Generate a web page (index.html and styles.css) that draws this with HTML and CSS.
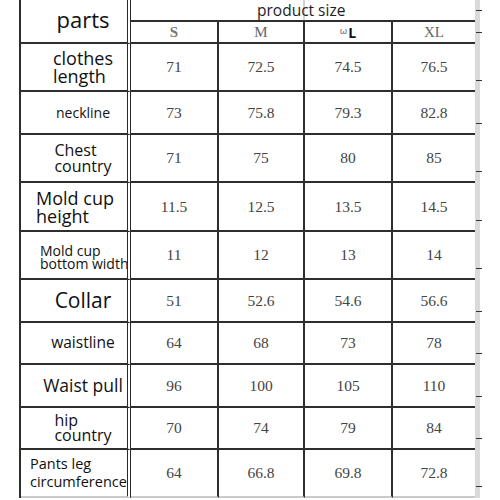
FILE: index.html
```html
<!DOCTYPE html>
<html>
<head>
<meta charset="utf-8">
<link rel="stylesheet" href="styles.css">
</head>
<body>
<div class="sheet">
  <div class="table">
    <div class="lab parts"><span class="t f22">parts</span></div>
    <div class="product"><span>product size</span></div>
    <div class="sz"><b>S</b></div>
    <div class="sz">M</div>
    <div class="sz"><span class="odd">ω</span><span class="bl">L</span></div>
    <div class="sz last">XL</div>

    <div class="lab"><span class="t f18">clothes<br>length</span></div>
    <div class="c">71</div><div class="c">72.5</div><div class="c">74.5</div><div class="c last">76.5</div>

    <div class="lab"><span class="t f14">neckline</span></div>
    <div class="c">73</div><div class="c">75.8</div><div class="c">79.3</div><div class="c last">82.8</div>

    <div class="lab"><span class="t f16">Chest<br>country</span></div>
    <div class="c">71</div><div class="c">75</div><div class="c">80</div><div class="c last">85</div>

    <div class="lab shift"><span class="t f18">Mold cup<br>height</span></div>
    <div class="c">11.5</div><div class="c">12.5</div><div class="c">13.5</div><div class="c last">14.5</div>

    <div class="lab left mb"><span class="t f14 tight">Mold cup<br>bottom width</span></div>
    <div class="c">11</div><div class="c">12</div><div class="c">13</div><div class="c last">14</div>

    <div class="lab"><span class="t f21">Collar</span></div>
    <div class="c">51</div><div class="c">52.6</div><div class="c">54.6</div><div class="c last">56.6</div>

    <div class="lab"><span class="t f15">waistline</span></div>
    <div class="c">64</div><div class="c">68</div><div class="c">73</div><div class="c last">78</div>

    <div class="lab"><span class="t f17">Waist pull</span></div>
    <div class="c">96</div><div class="c">100</div><div class="c">105</div><div class="c last">110</div>

    <div class="lab"><span class="t f16 mid">hip<br>country</span></div>
    <div class="c">70</div><div class="c">74</div><div class="c">79</div><div class="c last">84</div>

    <div class="lab left pl lastrow"><span class="t f145">Pants leg<br>circumference</span></div>
    <div class="c lastrow">64</div><div class="c lastrow">66.8</div><div class="c lastrow">69.8</div><div class="c last lastrow">72.8</div>
  </div>
  <div class="strip">
    <i></i><i></i><i></i><i></i><i></i><i></i><i></i><i></i><i></i><i></i><i></i><i></i>
  </div>
</div>
</body>
</html>
```
FILE: styles.css
```css
* { box-sizing: border-box; }
html, body { margin: 0; padding: 0; background: #fff; }
body { width: 500px; height: 500px; overflow: hidden; }

.sheet {
  display: flex;
  padding-left: 19px;
}

.table {
  display: grid;
  grid-template-columns: 110px 88px 86px 88px 82px;
  grid-template-rows: 22px 22px 48px 43px 48px 49px 48px 43px 42px 43px 42px 48px;
  border-left: 2px solid #2e2e2e;
  width: 456px;
}

.strip {
  display: grid;
  grid-template-rows: 22px 22px 48px 43px 48px 49px 48px 43px 42px 43px 42px 48px;
  width: 5px;
  background: #dadada;
  height: 498px;
}
.strip i {
  position: relative;
  display: block;
}
.strip i::after {
  content: "";
  position: absolute;
  left: 1px;
  bottom: 11px;
  width: 6px;
  height: 1px;
  background: #333;
}

.lab {
  grid-column: 1;
  display: flex;
  align-items: center;
  justify-content: center;
  padding-left: 18px;
  border-right: 4px double #2a2a2a;
  border-bottom: 2px solid #2e2e2e;
  overflow: hidden;
  white-space: nowrap;
  font-family: "Open Sans", "Noto Sans", sans-serif;
  color: #111;
}
.lab.parts { grid-row: span 2; }
.lab.shift { padding-left: 2px; }
.lab.left { justify-content: flex-start; }
.lab.mb { padding-left: 19px; }
.lab.pl { padding-left: 9px; }

.t { display: block; text-align: left; }
.f22 { font-size: 22px; line-height: 1; margin-top: -4px; }
.f21 { font-size: 21px; line-height: 1; }
.f18 { font-size: 18px; line-height: 18px; }
.f17 { font-size: 17.5px; line-height: 1; }
.f16 { font-size: 16px; line-height: 16px; }
.f15 { font-size: 15.5px; line-height: 1; }
.f145 { font-size: 14.5px; line-height: 18px; }
.f14 { font-size: 14px; line-height: 1; }
.tight { line-height: 13px; margin-top: 4px; }
.mid { line-height: 15px; }

.product {
  grid-column: 2 / span 4;
  border-bottom: 2px solid #2e2e2e;
  padding-left: 126px;
  font-family: "Open Sans", "Noto Sans", sans-serif;
  font-size: 15.5px;
  line-height: 20px;
  color: #1e1e1e;
  background: linear-gradient(to right, transparent 172px, #d4d4d4 172px, #d4d4d4 174px, transparent 174px);
}

.sz, .c {
  display: flex;
  align-items: center;
  justify-content: center;
  border-right: 2px solid #2e2e2e;
  border-bottom: 2px solid #2e2e2e;
  font-family: "Liberation Serif", "Times New Roman", serif;
  color: #444;
}
.sz { font-size: 15px; color: #666; padding-top: 1px; }
.sz b { font-weight: bold; color: #777; }
.sz .odd { font-family: "DejaVu Sans", sans-serif; font-size: 9px; color: #777; margin-top: -4px; margin-right: 1px; }
.sz .bl { font-family: "Open Sans", sans-serif; font-weight: bold; font-size: 14px; color: #111; }
.c { font-size: 15.5px; }
.last { border-right: none; }
.lastrow { border-bottom-color: #cacaca; }
```
